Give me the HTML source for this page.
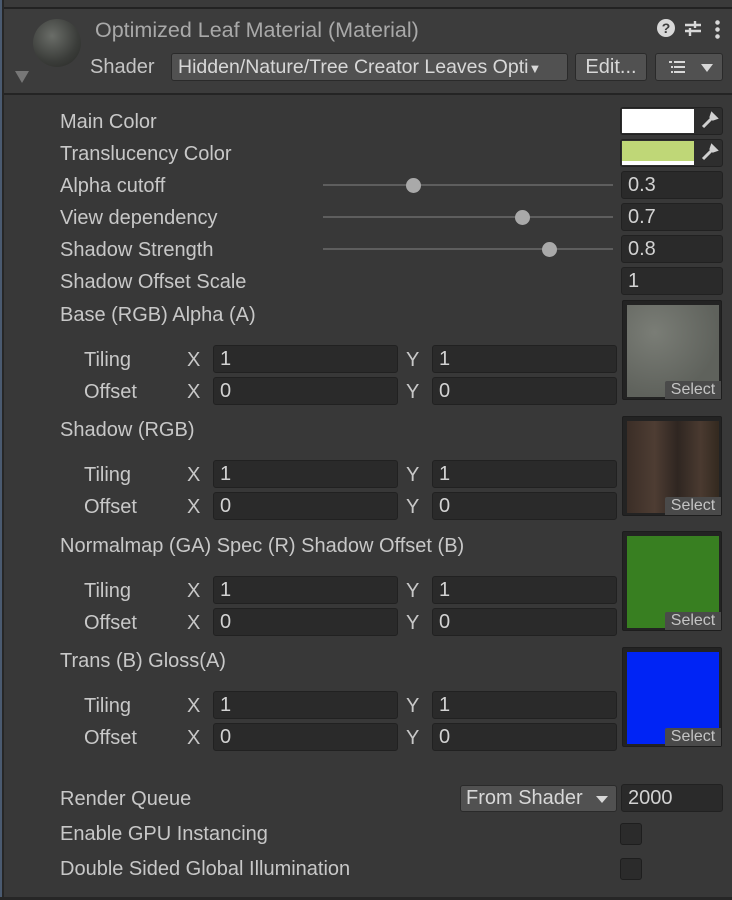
<!DOCTYPE html>
<html><head><meta charset="utf-8"><style>
*{margin:0;padding:0;box-sizing:border-box}
body{width:732px;height:900px;background:#383838;font-family:"Liberation Sans",sans-serif;color:#c8c8c8;position:relative;overflow:hidden;font-size:20px}
.a{position:absolute}
.lbl{position:absolute;line-height:20px;white-space:nowrap}
.fld{position:absolute;background:#2a2a2a;border:1px solid #212121;border-radius:3px;height:28px;line-height:26px;padding-left:6px;color:#d2d2d2}
.btn{position:absolute;background:#515151;border:1px solid #2a2a2a;border-radius:3px;color:#d8d8d8}
.track{position:absolute;height:2px;background:#5e5e5e;left:323px;width:290px}
.knob{position:absolute;width:15px;height:15px;border-radius:50%;background:#a9a9a9}
.tex{position:absolute;width:100px;height:100px;background:#232323;border:1px solid #1d1d1d;border-radius:2px}
.tex .in{position:absolute;left:4px;top:4px;width:92px;height:92px}
.sel{position:absolute;right:0;bottom:0;width:56px;height:18px;background:#4a4a4a;color:#c4c4c4;font-size:16px;line-height:18px;text-align:center;border-top-left-radius:2px}
.cb{position:absolute;left:620px;width:22px;height:22px;background:#2b2b2b;border:1px solid #1e1e1e;border-radius:3px}
</style></head><body>
<div class="a" style="left:0;top:0;width:732px;height:7px;background:#3a3a3a"></div>
<div class="a" style="left:0;top:7px;width:732px;height:2px;background:#222"></div>
<div class="a" style="left:0;top:9px;width:732px;height:84px;background:#3c3c3c"></div>
<div class="a" style="left:0;top:93px;width:732px;height:2px;background:#242424"></div>
<div class="a" style="left:0;top:0;width:2px;height:900px;background:#4a5a70"></div>
<div class="a" style="left:2px;top:0;width:2px;height:900px;background:#262626"></div>
<div class="a" style="left:33px;top:19px;width:48px;height:48px;border-radius:50%;background:radial-gradient(circle at 40% 35%,#6a6d68,#3b3d3a 60%,#262724)"></div>
<div class="a" style="left:15px;top:71px;width:0;height:0;border-left:7px solid transparent;border-right:7px solid transparent;border-top:12px solid #777"></div>
<div class="lbl" style="left:95px;top:18px;font-size:21.5px;line-height:24px;color:#a9a9a9">Optimized Leaf Material (Material)</div>
<div class="a" style="left:657px;top:19px;width:18px;height:18px;border-radius:50%;background:#d8d8d8;color:#3c3c3c;font-size:14px;font-weight:bold;text-align:center;line-height:18px">?</div>
<svg class="a" style="left:683px;top:18px" width="20" height="20" viewBox="0 0 20 20" stroke="#d8d8d8" stroke-width="2.4" fill="none"><path d="M2 7h16M2 13h16M12 3v7M7 10v8"/></svg>
<div class="a" style="left:715px;top:19px;width:5px;height:20px;background:radial-gradient(circle,#d8d8d8 2px,transparent 2.5px) 0 0/5px 7px repeat-y"></div>
<div class="lbl" style="left:90px;top:57px;font-size:20px;color:#c4c4c4">Shader</div>
<div class="btn" style="left:171px;top:53px;width:397px;height:28px;line-height:26px;padding-left:6px;font-size:19.5px;overflow:hidden;white-space:nowrap">Hidden/Nature/Tree Creator Leaves Opti<span style="font-size:13px">▼</span></div>
<div class="btn" style="left:575px;top:53px;width:72px;height:28px;line-height:26px;text-align:center;font-size:20px">Edit...</div>
<div class="btn" style="left:655px;top:53px;width:68px;height:28px"></div>
<svg class="a" style="left:668px;top:59px" width="20" height="16" viewBox="0 0 20 16" fill="#d8d8d8"><rect x="1" y="2" width="3" height="2"/><rect x="6" y="2" width="11" height="2"/><rect x="3" y="7" width="2" height="2"/><rect x="6" y="7" width="11" height="2"/><rect x="3" y="12" width="2" height="2"/><rect x="6" y="12" width="11" height="2"/></svg>
<div class="a" style="left:701px;top:64px;border-left:6px solid transparent;border-right:6px solid transparent;border-top:8px solid #d8d8d8"></div>

<div class="lbl" style="left:60px;top:112px">Main Color</div>
<div class="lbl" style="left:60px;top:144px">Translucency Color</div>
<div class="lbl" style="left:60px;top:176px">Alpha cutoff</div>
<div class="lbl" style="left:60px;top:208px">View dependency</div>
<div class="lbl" style="left:60px;top:240px">Shadow Strength</div>
<div class="lbl" style="left:60px;top:272px">Shadow Offset Scale</div>

<div class="a" style="left:620px;top:107px;width:103px;height:28px;background:#2e2e2e;border:1px solid #222;border-radius:3px"></div>
<div class="a" style="left:622px;top:109px;width:72px;height:24px;background:#fff"></div>
<div class="a" style="left:620px;top:139px;width:103px;height:28px;background:#2e2e2e;border:1px solid #222;border-radius:3px"></div>
<div class="a" style="left:622px;top:141px;width:72px;height:20px;background:#bfd777"></div>
<div class="a" style="left:622px;top:161px;width:72px;height:4px;background:#fff"></div>
<svg class="a" style="left:699px;top:111px" width="20" height="20" viewBox="0 0 20 20"><path d="M4 16l8-8M13 3l4 4-3 1-2-2z" stroke="#d0d0d0" stroke-width="3" fill="#d0d0d0"/></svg>
<svg class="a" style="left:699px;top:143px" width="20" height="20" viewBox="0 0 20 20"><path d="M4 16l8-8M13 3l4 4-3 1-2-2z" stroke="#d0d0d0" stroke-width="3" fill="#d0d0d0"/></svg>

<div class="track" style="top:184px"></div><div class="knob" style="left:406px;top:178px"></div>
<div class="track" style="top:216px"></div><div class="knob" style="left:515px;top:210px"></div>
<div class="track" style="top:248px"></div><div class="knob" style="left:542px;top:242px"></div>
<div class="fld" style="left:621px;top:171px;width:102px">0.3</div>
<div class="fld" style="left:621px;top:203px;width:102px">0.7</div>
<div class="fld" style="left:621px;top:235px;width:102px">0.8</div>
<div class="fld" style="left:621px;top:267px;width:102px">1</div>

<div class="lbl" style="left:60px;top:305px">Base (RGB) Alpha (A)</div>
<div class="lbl" style="left:84px;top:350px">Tiling</div><div class="lbl" style="left:187px;top:350px">X</div><div class="lbl" style="left:406px;top:350px">Y</div>
<div class="fld" style="left:213px;top:345px;width:185px">1</div><div class="fld" style="left:432px;top:345px;width:185px">1</div>
<div class="lbl" style="left:84px;top:382px">Offset</div><div class="lbl" style="left:187px;top:382px">X</div><div class="lbl" style="left:406px;top:382px">Y</div>
<div class="fld" style="left:213px;top:377px;width:185px">0</div><div class="fld" style="left:432px;top:377px;width:185px">0</div>
<div class="tex" style="left:622px;top:300px"><div class="in" style="background:radial-gradient(circle at 30% 30%,#7a7d76,#5f625c 70%)"></div><div class="sel">Select</div></div>

<div class="lbl" style="left:60px;top:420px">Shadow (RGB)</div>
<div class="lbl" style="left:84px;top:465px">Tiling</div><div class="lbl" style="left:187px;top:465px">X</div><div class="lbl" style="left:406px;top:465px">Y</div>
<div class="fld" style="left:213px;top:460px;width:185px">1</div><div class="fld" style="left:432px;top:460px;width:185px">1</div>
<div class="lbl" style="left:84px;top:497px">Offset</div><div class="lbl" style="left:187px;top:497px">X</div><div class="lbl" style="left:406px;top:497px">Y</div>
<div class="fld" style="left:213px;top:492px;width:185px">0</div><div class="fld" style="left:432px;top:492px;width:185px">0</div>
<div class="tex" style="left:622px;top:416px"><div class="in" style="background:linear-gradient(90deg,#3b2e27,#4e3d33 30%,#2f2621 55%,#4a3a30 80%,#33291f)"></div><div class="sel">Select</div></div>

<div class="lbl" style="left:60px;top:536px">Normalmap (GA) Spec (R) Shadow Offset (B)</div>
<div class="lbl" style="left:84px;top:581px">Tiling</div><div class="lbl" style="left:187px;top:581px">X</div><div class="lbl" style="left:406px;top:581px">Y</div>
<div class="fld" style="left:213px;top:576px;width:185px">1</div><div class="fld" style="left:432px;top:576px;width:185px">1</div>
<div class="lbl" style="left:84px;top:613px">Offset</div><div class="lbl" style="left:187px;top:613px">X</div><div class="lbl" style="left:406px;top:613px">Y</div>
<div class="fld" style="left:213px;top:608px;width:185px">0</div><div class="fld" style="left:432px;top:608px;width:185px">0</div>
<div class="tex" style="left:622px;top:531px"><div class="in" style="background:#387f21"></div><div class="sel">Select</div></div>

<div class="lbl" style="left:60px;top:651px">Trans (B) Gloss(A)</div>
<div class="lbl" style="left:84px;top:696px">Tiling</div><div class="lbl" style="left:187px;top:696px">X</div><div class="lbl" style="left:406px;top:696px">Y</div>
<div class="fld" style="left:213px;top:691px;width:185px">1</div><div class="fld" style="left:432px;top:691px;width:185px">1</div>
<div class="lbl" style="left:84px;top:728px">Offset</div><div class="lbl" style="left:187px;top:728px">X</div><div class="lbl" style="left:406px;top:728px">Y</div>
<div class="fld" style="left:213px;top:723px;width:185px">0</div><div class="fld" style="left:432px;top:723px;width:185px">0</div>
<div class="tex" style="left:622px;top:647px"><div class="in" style="background:#0024f5"></div><div class="sel">Select</div></div>

<div class="lbl" style="left:60px;top:789px">Render Queue</div>
<div class="btn" style="left:460px;top:785px;width:157px;height:27px;line-height:25px;padding-left:5px;font-size:20px">From Shader</div>
<div class="a" style="left:596px;top:796px;border-left:6px solid transparent;border-right:6px solid transparent;border-top:7px solid #d8d8d8"></div>
<div class="fld" style="left:621px;top:784px;width:102px;font-size:20px">2000</div>
<div class="lbl" style="left:60px;top:824px">Enable GPU Instancing</div>
<div class="cb" style="top:823px"></div>
<div class="lbl" style="left:60px;top:859px">Double Sided Global Illumination</div>
<div class="cb" style="top:858px"></div>
<div class="a" style="left:0;top:897px;width:732px;height:3px;background:#262626"></div>
</body></html>
